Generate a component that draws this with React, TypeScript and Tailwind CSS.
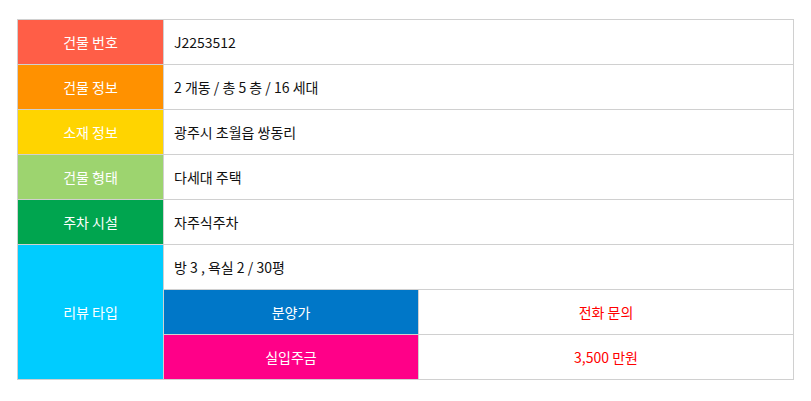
const rows = [
  { label: "건물 번호", bg: "bg-[#ff5e47]", value: "J2253512" },
  { label: "건물 정보", bg: "bg-[#ff9100]", value: "2 개동 / 총 5 층 / 16 세대" },
  { label: "소재 정보", bg: "bg-[#ffd400]", value: "광주시 초월읍 쌍동리" },
  { label: "건물 형태", bg: "bg-[#9dd46f]", value: "다세대 주택" },
  { label: "주차 시설", bg: "bg-[#00a54f]", value: "자주식주차" },
];

const cell = "border border-[#d0d0d0] h-[45px] p-0";

export default function App() {
  return (
    <div className="pt-[19px] pl-[17px] bg-white min-h-[401px] font-['Noto_Sans_CJK_KR','Noto_Sans',sans-serif] text-[14px]">
      <table className="table-fixed border-collapse w-[777px]">
        <colgroup>
          <col className="w-[146px]" />
          <col className="w-[255px]" />
          <col />
        </colgroup>
        <tbody>
          {rows.map((r) => (
            <tr key={r.label}>
              <td className={`${cell} ${r.bg} text-center text-white`}>{r.label}</td>
              <td colSpan={2} className={`${cell} pl-[10px] text-[#111]`}>
                {r.value}
              </td>
            </tr>
          ))}
          <tr>
            <td rowSpan={3} className={`${cell} bg-[#00ccff] text-center text-white`}>
              리뷰 타입
            </td>
            <td colSpan={2} className={`${cell} pl-[10px] text-[#111]`}>
              방 3 , 욕실 2 / 30평
            </td>
          </tr>
          <tr>
            <td className={`${cell} bg-[#0077c8] text-center text-white`}>분양가</td>
            <td className={`${cell} text-center text-[#ff0000]`}>전화 문의</td>
          </tr>
          <tr>
            <td className={`${cell} bg-[#ff0088] text-center text-white`}>실입주금</td>
            <td className={`${cell} text-center text-[#ff0000]`}>3,500 만원</td>
          </tr>
        </tbody>
      </table>
    </div>
  );
}
